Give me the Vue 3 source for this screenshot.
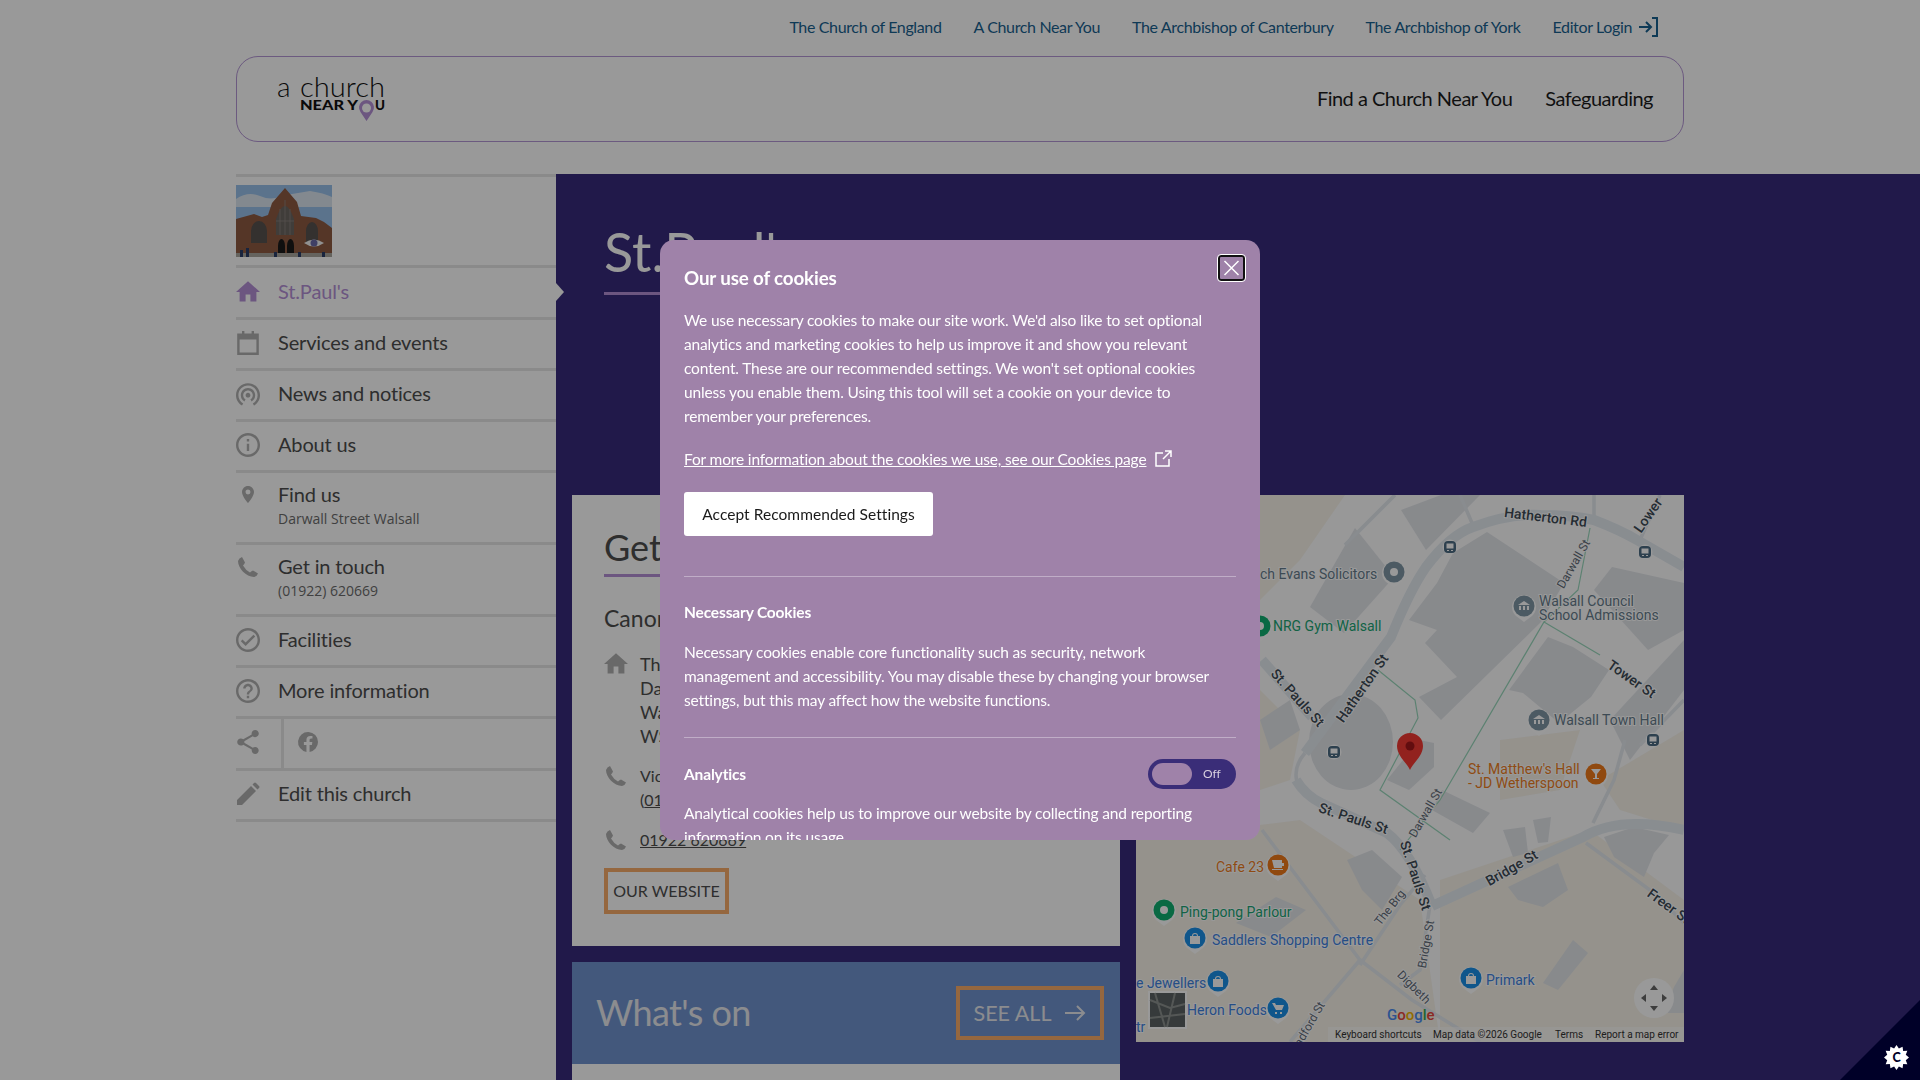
<script setup>
const topLinks = ['The Church of England', 'A Church Near You', 'The Archbishop of Canterbury', 'The Archbishop of York']

const icons = {
  home: 'M10 20v-6h4v6h5v-8h3L12 3 2 12h3v8z',
  calendar: 'M7 2h2v2h6V2h2v2h4v18H3V4h4V2zM5 9v11h14V9H5z',
  news: 'M12 11c-1.1 0-2 .9-2 2 0 1.1.9 2 2 2s2-.9 2-2c0-1.1-.9-2-2-2zm6 2c0-3.31-2.69-6-6-6s-6 2.69-6 6c0 2.22 1.21 4.15 3 5.19l1-1.74c-1.19-.7-2-1.97-2-3.45 0-2.21 1.79-4 4-4s4 1.79 4 4c0 1.48-.81 2.75-2 3.45l1 1.74c1.79-1.04 3-2.97 3-5.19zM12 3C6.48 3 2 7.48 2 13c0 3.7 2.01 6.92 4.99 8.65l1-1.73C5.61 18.53 4 15.96 4 13c0-4.42 3.58-8 8-8s8 3.58 8 8c0 2.96-1.61 5.53-4 6.92l1 1.73c2.99-1.73 5-4.95 5-8.65 0-5.52-4.48-10-10-10z',
  info: 'M11 7h2v2h-2zm0 4h2v6h-2zm1-9C6.48 2 2 6.48 2 12s4.48 10 10 10 10-4.48 10-10S17.52 2 12 2zm0 18c-4.41 0-8-3.59-8-8s3.59-8 8-8 8 3.59 8 8-3.59 8-8 8z',
  pin: 'M12 3C8.7 3 6 5.7 6 9c0 4.5 6 11 6 11s6-6.500 6-11c0-3.300-2.700-6-6-6zm0 8.500a2.500 2.500 0 010-5 2.500 2.500 0 010 5z',
  phone: 'M6 2l3 5.500Q8.500 9 7 10.500 9.500 15 14 17.500 15.500 16 17 15.500l5 3Q21 21.500 18 22C10 22 2 13 2 6q1-3 4-4z',
  check: 'M12 2C6.48 2 2 6.48 2 12s4.48 10 10 10 10-4.48 10-10S17.52 2 12 2zm0 18c-4.41 0-8-3.59-8-8s3.59-8 8-8 8 3.59 8 8-3.59 8-8 8zm4.590-12.420L10 14.170l-2.590-2.580L6 13l4 4 8-8z',
  help: 'M11 18h2v-2h-2v2zm1-16C6.48 2 2 6.48 2 12s4.48 10 10 10 10-4.48 10-10S17.52 2 12 2zm0 18c-4.41 0-8-3.59-8-8s3.59-8 8-8 8 3.59 8 8-3.59 8-8 8zm0-14c-2.21 0-4 1.790-4 4h2c0-1.100.9-2 2-2s2 .9 2 2c0 2-3 1.750-3 5h2c0-2.250 3-2.500 3-5 0-2.210-1.790-4-4-4z',
  share: 'M18 16.080c-.76 0-1.440.3-1.960.77L8.910 12.700c.05-.23.09-.46.09-.7s-.04-.47-.09-.7l7.050-4.110c.54.5 1.250.81 2.040.81 1.660 0 3-1.340 3-3s-1.340-3-3-3-3 1.340-3 3c0 .24.04.47.09.7L8.040 9.810C7.500 9.310 6.790 9 6 9c-1.660 0-3 1.340-3 3s1.340 3 3 3c.79 0 1.500-.31 2.040-.81l7.120 4.160c-.05.21-.08.43-.08.65 0 1.610 1.310 2.920 2.920 2.920s2.920-1.310 2.920-2.920-1.310-2.920-2.920-2.920z',
  facebook: 'M22 12a10 10 0 10-11.560 9.880v-6.990H7.900V12h2.540V9.800c0-2.500 1.490-3.890 3.780-3.890 1.090 0 2.240.2 2.240.2v2.460h-1.260c-1.240 0-1.630.77-1.630 1.560V12h2.770l-.44 2.890h-2.330v6.990A10 10 0 0022 12z',
  edit: 'M1 23v-5L15 4l5 5L6 23H1zM16.500 2.500L18 1q1-1 2 0l3 3q1 1 0 2l-1.500 1.500-5-5z',
}

// phone, pin and the rest don't fill their box the same way
const box = (name) => (['phone', 'pin', 'edit', 'facebook'].includes(name) ? '0 0 24 24' : '2 2 20 20')

const sideNav = [
  { name: "St.Paul's", icon: 'home', active: true },
  { name: 'Services and events', icon: 'calendar' },
  { name: 'News and notices', icon: 'news' },
  { name: 'About us', icon: 'info' },
  { name: 'Find us', sub: 'Darwall Street Walsall', icon: 'pin' },
  { name: 'Get in touch', sub: '(01922) 620669', icon: 'phone' },
  { name: 'Facilities', icon: 'check' },
  { name: 'More information', icon: 'help' },
]

// map is drawn in page coordinates, see the viewBox on the svg
const tanAreas = [
  '1136,840 1300,820 1420,900 1440,1042 1136,1042',
  '1440,880 1590,830 1684,900 1684,1042 1440,1042',
  '1260,495 1345,495 1300,560 1260,600',
  '1600,780 1684,730 1684,830 1620,810',
  '1260,690 1300,730 1290,780 1260,790',
  '1500,740 1580,730 1560,790 1500,800',
]
const buildings = [
  '1487,532 1564,583 1541,622 1441,720 1419,697 1457,677 1425,643 1437,630 1409,620 1437,583 1453,553',
  '1355,528 1394,577 1344,633 1310,607',
  '1548,637 1573,647 1609,670 1591,697 1559,723 1523,693 1509,690',
  '1612,567 1684,583 1684,630 1648,650 1594,590',
  '1401,510 1441,495 1480,495 1426,550',
  '1387,780 1419,740 1434,743 1434,767 1409,790',
  '1347,860 1372,850 1402,877 1382,910 1362,890',
  '1442,790 1490,813 1473,833 1432,810',
  '1508,887 1558,863 1568,890 1543,907 1518,900',
  '1543,983 1573,940 1588,953 1558,990',
  '1503,830 1525,827 1528,853 1513,857',
  '1533,820 1551,817 1548,842 1538,843',
  '1604,837 1634,827 1669,835 1654,853 1644,877 1614,857',
  '1674,987 1684,970 1684,1013 1664,1013',
  '1236,923 1276,897 1306,910 1271,937',
  '1610,720 1684,640 1684,690 1630,760',
  '1260,720 1290,700 1300,730 1270,750',
]
const bigRoads = [
  'M1305 753L1391 637Q1410 590 1426 567Q1450 535 1473 527Q1510 513 1541 515Q1570 515 1594 520Q1620 530 1637 540L1684 567',
  'M1432 906L1583 837Q1620 815 1684 830',
  'M1296 780Q1305 795 1321 803L1387 833Q1410 850 1432 906',
  'M1262 660L1312 717',
]
const minorRoads = [
  'M1305 753Q1290 770 1300 790',
  'M1586 843L1654 893L1684 923',
  'M1593 823L1614 780L1625 740',
  'M1262 830L1360 960L1412 1000L1480 1042',
  'M1360 960L1290 1042',
  'M1360 965L1400 905L1425 875',
  'M1430 905L1420 970L1400 985',
  'M1594 495L1594 525M1660 495L1640 540',
  'M1395 495L1345 545',
  'M1460 495L1475 530',
  'M1640 745L1684 700',
]
const paths = [
  'M1590 528L1578 590L1544 622L1440 800L1400 850',
  'M1544 622L1600 655',
  'M1378 670L1415 700L1418 718L1380 790L1450 840',
]
const roadLabels = [
  { text: 'Hatherton Rd', x: 1545, y: 522, r: 7, big: true },
  { text: 'Hatherton St', x: 1366, y: 691, r: -55, big: true },
  { text: 'St. Pauls St', x: 1294, y: 701, r: 48, big: true },
  { text: 'Tower St', x: 1629, y: 683, r: 35, big: true },
  { text: 'Darwall St', x: 1577, y: 566, r: -60, small: true },
  { text: 'Lower', x: 1652, y: 518, r: -55, big: true },
  { text: 'St. Pauls St', x: 1352, y: 823, r: 18, big: true },
  { text: 'St. Pauls St', x: 1411, y: 877, r: 72, big: true },
  { text: 'Bridge St', x: 1514, y: 872, r: -30, big: true },
  { text: 'Darwall St', x: 1429, y: 815, r: -60, small: true },
  { text: 'The Brg', x: 1393, y: 910, r: -52, small: true },
  { text: 'Bridge St', x: 1430, y: 945, r: -80, small: true },
  { text: 'Digbeth', x: 1411, y: 990, r: 45, small: true },
  { text: 'adford St', x: 1313, y: 1026, r: -60, small: true },
  { text: 'Freer St', x: 1666, y: 910, r: 36, big: true },
]
const pois = [
  { lines: ['ch Evans Solicitors'], x: 1260, y: 579, color: '#667c8c' },
  { lines: ['Walsall Council', 'School Admissions'], x: 1539, y: 606, color: '#667c8c' },
  { lines: ['Walsall Town Hall'], x: 1554, y: 725, color: '#667c8c' },
  { lines: ['NRG Gym Walsall'], x: 1273, y: 631, color: '#20a574' },
  { lines: ["St. Matthew's Hall", '- JD Wetherspoon'], x: 1468, y: 774, color: '#ee7e1e' },
  { lines: ['Cafe 23'], x: 1216, y: 872, color: '#ee7e1e' },
  { lines: ['Ping-pong Parlour'], x: 1180, y: 917, color: '#20a574' },
  { lines: ['Saddlers Shopping Centre'], x: 1212, y: 945, color: '#3f82e0' },
  { lines: ['Primark'], x: 1486, y: 985, color: '#3f82e0' },
  { lines: ['e Jewellers'], x: 1136, y: 988, color: '#3f82e0' },
  { lines: ['Heron Foods'], x: 1187, y: 1015, color: '#3f82e0' },
  { lines: ['tr'], x: 1136, y: 1032, color: '#3f82e0' },
]
const markers = [
  { x: 1394, y: 572, color: '#7f97a6', kind: 'dot' },
  { x: 1524, y: 606, color: '#7f97a6', kind: 'hall' },
  { x: 1539, y: 720, color: '#7f97a6', kind: 'hall' },
  { x: 1260, y: 626, color: '#10b070', kind: 'dot' },
  { x: 1596, y: 774, color: '#f07a1a', kind: 'glass' },
  { x: 1278, y: 865, color: '#f07a1a', kind: 'cup' },
  { x: 1164, y: 910, color: '#10b070', kind: 'dot' },
  { x: 1195, y: 938, color: '#1a8fe8', kind: 'bag' },
  { x: 1218, y: 981, color: '#1a8fe8', kind: 'bag' },
  { x: 1471, y: 978, color: '#1a8fe8', kind: 'bag' },
  { x: 1278, y: 1008, color: '#1a8fe8', kind: 'cart' },
]
const busStops = [
  { x: 1450, y: 547 },
  { x: 1645, y: 552 },
  { x: 1653, y: 740 },
  { x: 1334, y: 752 },
]
</script>

<template>
  <div class="page">
    <div class="toplinks">
      <a v-for="link in topLinks" :key="link">{{ link }}</a>
      <a class="login">Editor Login
        <svg viewBox="0 0 20 20" class="stroke-icon">
          <path d="M1 10h11M8 5l5 5-5 5M14 1h5v18h-5" />
        </svg>
      </a>
    </div>

    <header class="siteheader">
      <svg class="logo" viewBox="0 0 108 46">
        <text x="0" y="18" class="logo-top" font-size="28">a</text>
        <text x="23" y="18" class="logo-top" textLength="85" lengthAdjust="spacingAndGlyphs">church</text>
        <text x="23" y="31" class="logo-bottom" textLength="58" lengthAdjust="spacingAndGlyphs">NEAR Y</text>
        <text x="98" y="31" class="logo-bottom" textLength="10" lengthAdjust="spacingAndGlyphs">U</text>
        <path d="M89.500 42l-6-9a7.500 7.500 0 1112 0z" fill="#b48fd6" />
        <circle cx="89.500" cy="29" r="4.500" fill="#fff" />
      </svg>
      <nav class="mainnav">
        <a>Find a Church Near You</a>
        <a>Safeguarding</a>
      </nav>
    </header>

    <div class="main">
      <aside class="sidebar">
        <div class="photo">
          <svg viewBox="0 0 96 72" width="96" height="72">
            <rect width="96" height="72" fill="#98c0ea" />
            <path d="M0 14q12-8 24-3t20 0l30-5q14 2 22 6v10H0z" fill="#dbe5ef" />
            <path d="M0 34l18-5 8 3 6-2 4-12L49 3l12 14 4 14 15 2 8 4 8 6v29H0z" fill="#8e5a42" />
            <path d="M40 34q9-26 18 0v16H40z" fill="#6b6662" />
            <path d="M49 15v35M44 24v26M54 24v26M40 36h18" stroke="#8e8780" stroke-width="0.800" fill="none" />
            <path d="M15 46a8 10 0 0116 0v12H15zM70 46a6 9 0 0112 0v11H70z" fill="#57524f" />
            <path d="M42 61a3.500 7 0 017 0v9h-7zM51 61a3.500 7 0 017 0v9h-7z" fill="#191919" />
            <rect y="68" width="96" height="4" fill="#a8a59d" />
            <path d="M4 72v-7h3v7zM10 72v-9h3v9zM38 72v-5h3v5zM62 72v-5h3v5zM86 72v-5h3v5z" fill="#2b3d66" />
            <path d="M68 58q10-7 20 0-10 7-20 0z" fill="#f2f2f2" />
            <circle cx="78" cy="58" r="3.500" fill="#6a6aa8" />
          </svg>
        </div>
        <a
          v-for="item in sideNav"
          :key="item.name"
          class="navrow"
          :class="{ active: item.active, two: item.sub }"
        >
          <svg class="icon" :viewBox="box(item.icon)"><path :d="icons[item.icon]" /></svg>
          <span class="navtext">
            <span class="navname">{{ item.name }}</span>
            <span v-if="item.sub" class="navsub">{{ item.sub }}</span>
          </span>
        </a>
        <div class="navrow social">
          <svg class="icon" :viewBox="box('share')"><path :d="icons.share" /></svg>
          <span class="socialsplit"></span>
          <svg class="icon fb" :viewBox="box('facebook')"><path :d="icons.facebook" /></svg>
        </div>
        <a class="navrow last">
          <svg class="icon" :viewBox="box('edit')"><path :d="icons.edit" /></svg>
          <span class="navtext"><span class="navname">Edit this church</span></span>
        </a>
      </aside>

      <main class="content">
        <div class="titleblock">
          <h1>St.Paul's</h1>
        </div>
        <div class="columns">
          <div class="leftcol">
            <section class="card">
              <h2>Get in touch</h2>
              <h3>Canon Chris</h3>
              <div class="contact address">
                <svg class="icon" :viewBox="box('home')"><path :d="icons.home" /></svg>
                <p>The Vicarage<br />Darwall Street<br />Walsall<br />WS1 1DA</p>
              </div>
              <div class="contact">
                <svg class="icon" :viewBox="box('phone')"><path :d="icons.phone" /></svg>
                <p>Vicar<br />(<u>01922</u>) 620669</p>
              </div>
              <div class="contact">
                <svg class="icon" :viewBox="box('phone')"><path :d="icons.phone" /></svg>
                <p><u>01922 620669</u></p>
              </div>
              <a class="outline-btn">OUR WEBSITE</a>
            </section>
            <section class="whatson">
              <h2>What's on</h2>
              <a class="seeall">SEE ALL
                <svg viewBox="0 0 22 18" class="stroke-icon"><path d="M1 9h19M13 2l7 7-7 7" /></svg>
              </a>
            </section>
            <section class="nextcard"></section>
          </div>

          <div class="map">
            <svg viewBox="1136 495 548 547" width="548" height="547">
              <rect x="1136" y="495" width="548" height="547" fill="#fdfdfe" />
              <polygon v-for="t in tanAreas" :key="t" :points="t" fill="#f8f4ea" />
              <polygon v-for="b in buildings" :key="b" :points="b" fill="#e3e6ea" />
              <ellipse cx="1351" cy="742" rx="42" ry="48" fill="#e3e6ea" />
              <path v-for="r in minorRoads" :key="r" :d="r" class="road-minor" />
              <path v-for="r in bigRoads" :key="r" :d="r" class="road-big" />
              <path v-for="p in paths" :key="p" :d="p" class="footpath" />

              <g v-for="(l, i) in roadLabels" :key="i" :transform="`translate(${l.x} ${l.y}) rotate(${l.r})`">
                <text text-anchor="middle" class="roadlabel" :class="{ big: l.big, small: l.small }">{{ l.text }}</text>
              </g>

              <text v-for="(p, i) in pois" :key="i" :x="p.x" :y="p.y" class="poi" :fill="p.color">
                <tspan v-for="(line, n) in p.lines" :key="line" :x="p.x" :dy="n ? 14 : 0">{{ line }}</tspan>
              </text>

              <g v-for="(m, i) in markers" :key="i" :transform="`translate(${m.x} ${m.y})`">
                <path d="M0 16l-8-6a12 12 0 1116 0z" fill="#fff" />
                <circle r="10.500" :fill="m.color" />
                <circle v-if="m.kind === 'dot'" r="4" fill="#fff" />
                <path v-if="m.kind === 'hall'" d="M-6-1l6-4 6 4zM-5 0h2v4h-2zM-1 0h2v4h-2zM3 0h2v4H3z" fill="#fff" />
                <path v-if="m.kind === 'glass'" d="M-5-5H5L1 0v4h2v1h-6V4h2V0z" fill="#fff" />
                <path v-if="m.kind === 'cup'" d="M-6-5H4v3h2v3H4v2h-8zM-6 4H5v1H-6z" fill="#fff" />
                <path v-if="m.kind === 'bag'" d="M-5-2h2a3 3 0 016 0h2v8h-10zM-2-2h4a2 2 0 00-4 0z" fill="#fff" fill-rule="evenodd" />
                <path v-if="m.kind === 'cart'" d="M-6-5h3l1 2h8l-2 5h-6zM-3 4h2v2h-2zM2 4h2v2H2z" fill="#fff" />
              </g>

              <g v-for="(b, i) in busStops" :key="i" :transform="`translate(${b.x} ${b.y})`">
                <circle r="7.500" fill="#fff" />
                <rect x="-6" y="-6" width="12" height="12" rx="4" fill="#4b6b83" />
                <path d="M-3.500-3.500h7v5h-7zM-3 3h2v1h-2zM1 3h2v1H1z" fill="#fff" />
              </g>

              <path d="M1410 770c-3-7-13-14-13-24a13 13 0 0126 0c0 10-10 17-13 24z" fill="#f43a33" />
              <circle cx="1410" cy="746" r="4.500" fill="#a3161a" />

              <text x="1387" y="1020" class="googlelogo"><tspan fill="#4a8bf0">G</tspan><tspan fill="#e8453c">o</tspan><tspan fill="#f4b400">o</tspan><tspan fill="#4a8bf0">g</tspan><tspan fill="#34a853">l</tspan><tspan fill="#e8453c">e</tspan></text>

              <rect x="1148" y="991" width="39" height="38" fill="#fff" />
              <rect x="1150" y="993" width="35" height="34" fill="#5b6263" />
              <path d="M1150 1000l20 8 15-4M1155 993l10 34M1175 993l-8 34M1150 1018l35-4" stroke="#8d928f" stroke-width="2" fill="none" />

              <circle cx="1654" cy="998" r="20" fill="#fff" />
              <path d="M1654 985l-4 5h8zM1654 1011l-4-5h8zM1641 998l5-4v8zM1667 998l-5-4v8z" fill="#666" />

              <rect x="1328" y="1027" width="356" height="15" fill="#fff" opacity="0.5" />
              <text class="mapfoot" x="1335" y="1038">Keyboard shortcuts</text>
              <text class="mapfoot" x="1433" y="1038">Map data ©2026 Google</text>
              <text class="mapfoot" x="1555" y="1038">Terms</text>
              <text class="mapfoot" x="1595" y="1038">Report a map error</text>
            </svg>
          </div>
        </div>
      </main>
    </div>

    <div class="overlay">
      <div class="modal">
        <button class="close" aria-label="Close">
          <svg viewBox="0 0 16 16"><path d="M1 1l14 14M15 1L1 15" /></svg>
        </button>
        <h2 class="modal-title">Our use of cookies</h2>
        <p class="first">We use necessary cookies to make our site work. We'd also like to set optional<br />analytics and marketing cookies to help us improve it and show you relevant<br />content. These are our recommended settings. We won't set optional cookies<br />unless you enable them. Using this tool will set a cookie on your device to<br />remember your preferences.</p>
        <a class="morelink"><u>For more information about the cookies we use, see our Cookies page</u>
          <svg viewBox="0 0 18 18" class="stroke-icon"><path d="M9 3H2v13h13V9M11 1h6v6M17 1l-8 8" /></svg>
        </a>
        <button class="accept">Accept Recommended Settings</button>
        <hr class="first-rule" />
        <h3>Necessary Cookies</h3>
        <p class="necessary">Necessary cookies enable core functionality such as security, network<br />management and accessibility. You may disable these by changing your browser<br />settings, but this may affect how the website functions.</p>
        <hr class="second-rule" />
        <div class="analytics">
          <h3>Analytics</h3>
          <div class="toggle"><span class="knob"></span><span class="off">Off</span></div>
        </div>
        <p class="analytical">Analytical cookies help us to improve our website by collecting and reporting<br />information on its usage.</p>
      </div>
    </div>

    <button class="cookiebtn" aria-label="Cookie settings">
      <svg viewBox="0 0 24 24">
        <path d="M12 0l2.300 3.400L17.800 1.700l.6 4 4-.1-1.500 3.800 3.100 2.600-3.100 2.600 1.500 3.800-4-.1-.6 4-3.500-1.700L12 24l-2.300-3.400-3.500 1.700-.6-4-4 .1 1.500-3.800L0 12l3.100-2.600-1.500-3.800 4 .1.6-4 3.500 1.700z" fill="#fff" />
        <text x="12" y="16.500" text-anchor="middle" class="gear-c">C</text>
      </svg>
    </button>
  </div>
</template>

<style>
html, body {
  margin: 0;
  overflow: hidden;
  background: #fff;
}
</style>

<style scoped>
.page {
  height: 1080px;
  font-family: Lato, "Open Sans", sans-serif;
  color: #4d4d4d;
  overflow: hidden;
}

.toplinks {
  height: 56px;
  box-sizing: border-box;
  padding: 0 262px 3px 0;
  display: flex;
  justify-content: flex-end;
  align-items: center;
  gap: 32px;
  font-size: 16px;
  letter-spacing: -0.36px;
  color: #18618f;
}
.login {
  display: flex;
  align-items: center;
  gap: 6px;
}
.login svg {
  width: 20px;
  height: 20px;
}
.stroke-icon {
  fill: none;
  stroke: currentColor;
  stroke-width: 2;
}

.siteheader {
  margin: 0 236px;
  height: 86px;
  box-sizing: border-box;
  border: 1px solid #b496d5;
  border-radius: 22px;
  display: flex;
  justify-content: space-between;
  align-items: center;
  padding: 0 30px 0 40px;
}
.logo {
  width: 108px;
  height: 46px;
  margin-top: 6px;
  overflow: visible;
}
.logo-top {
  font-family: Lato, sans-serif;
  font-weight: 300;
  font-size: 28px;
  fill: #111;
}
.logo-bottom {
  font-family: Lato, sans-serif;
  font-weight: 900;
  font-size: 14px;
  fill: #111;
}
.mainnav {
  display: flex;
  gap: 33px;
  font-size: 20px;
  letter-spacing: -0.5px;
  color: #1c1c1c;
  margin-top: -2px;
}

.main {
  margin: 32px 0 0 236px;
  height: 906px;
  display: flex;
}

.sidebar {
  width: 320px;
  flex: none;
}
.photo {
  border-top: 3px solid #e6e6e6;
  padding: 8px 0;
  height: 72px;
}
.photo svg {
  display: block;
}
.navrow {
  position: relative;
  display: flex;
  gap: 18px;
  box-sizing: border-box;
  height: 51px;
  border-top: 3px solid #e6e6e6;
  padding-top: 11px;
  font-size: 20px;
}
.navrow.active {
  height: 52px;
  padding-top: 12px;
  color: #b48fd6;
}
.navrow.active .icon {
  fill: #b48fd6;
}
.navrow.active::after {
  content: "";
  position: absolute;
  right: -8px;
  top: 15px;
  border-left: 8px solid #fff;
  border-top: 9px solid transparent;
  border-bottom: 9px solid transparent;
}
.navrow.two {
  height: 72px;
  padding-top: 10px;
}
.navrow.last {
  height: 54px;
  border-bottom: 3px solid #e6e6e6;
}
.icon {
  width: 24px;
  height: 24px;
  flex: none;
  fill: #b0b0b0;
}
.navtext {
  display: flex;
  flex-direction: column;
  margin-top: -2px;
}
.navname {
  line-height: 26px;
  letter-spacing: -0.15px;
}
.navsub {
  font-family: "Open Sans", sans-serif;
  font-size: 14px;
  line-height: 20px;
  margin-top: 2px;
  color: #6b6b6b;
}
.social {
  height: 52px;
  gap: 0;
}
.socialsplit {
  width: 3px;
  height: 49px;
  margin: -11px 12px 0 21px;
  background: #e6e6e6;
}

.content {
  flex: 1;
  background: #372b7c;
  min-width: 0;
}
.titleblock {
  padding: 46px 0 0 48px;
  height: 275px;
}
h1 {
  display: inline-block;
  margin: 0;
  padding: 0 44px 8px 0;
  font-size: 54px;
  line-height: 64px;
  font-weight: 400;
  color: #fff;
  border-bottom: 3px solid #b48fd6;
}
.columns {
  padding-left: 16px;
  display: flex;
  gap: 16px;
  align-items: flex-start;
}
.leftcol {
  width: 548px;
  display: flex;
  flex-direction: column;
  gap: 16px;
}
.card {
  background: #fff;
  padding: 30px 32px 32px;
  box-sizing: border-box;
  height: 451px;
}
.card h2 {
  display: inline-block;
  margin: 0;
  padding-bottom: 5px;
  font-size: 36px;
  line-height: 44px;
  font-weight: 400;
  border-bottom: 3px solid #b48fd6;
}
.card h3 {
  margin: 26px 0 19px;
  font-size: 23px;
  line-height: 30px;
  font-weight: 400;
}
.contact {
  display: flex;
  gap: 12px;
  margin-bottom: 16px;
  font-size: 16px;
  line-height: 24px;
}
.contact.address {
  font-size: 18px;
}
.contact p {
  margin: 0;
}
.outline-btn {
  display: inline-block;
  box-sizing: border-box;
  height: 46px;
  width: 125px;
  border: 4px solid #f8ac69;
  text-align: center;
  line-height: 38px;
  font-size: 16px;
}
.whatson {
  height: 102px;
  box-sizing: border-box;
  background: #7093cf;
  display: flex;
  justify-content: space-between;
  align-items: center;
  padding: 0 16px 0 24px;
  color: #e8eaee;
}
.whatson h2 {
  margin: 0 0 2px;
  font-size: 36px;
  letter-spacing: -0.6px;
  font-weight: 400;
}
.seeall {
  width: 148px;
  height: 54px;
  box-sizing: border-box;
  border: 4px solid #f8ac69;
  display: flex;
  align-items: center;
  justify-content: center;
  gap: 13px;
  font-size: 21.500px;
}
.seeall svg {
  width: 22px;
  height: 18px;
}
.nextcard {
  margin-top: -16px;
  height: 60px;
  background: #fff;
}
.map {
  width: 548px;
  height: 547px;
  overflow: hidden;
}
.map svg {
  display: block;
  font-family: Roboto, sans-serif;
}
.road-big {
  fill: none;
  stroke: #e4ebf1;
  stroke-width: 10;
}
.road-minor {
  fill: none;
  stroke: #e4e9ee;
  stroke-width: 3.500;
}
.footpath {
  fill: none;
  stroke: #9ad8bc;
  stroke-width: 1.200;
}
.roadlabel {
  font-size: 12.500px;
  font-weight: 400;
  fill: #5f6b77;
  paint-order: stroke;
  stroke: #fff;
  stroke-width: 2px;
}
.roadlabel.big {
  font-size: 14px;
  font-weight: 500;
  fill: #3d4a55;
}
.roadlabel.small {
  font-size: 12px;
}
.poi {
  font-size: 14px;
  paint-order: stroke;
  stroke: #fff;
  stroke-width: 2px;
}
.googlelogo {
  font-size: 15px;
  font-weight: 500;
}
.mapfoot {
  font-size: 10px;
  fill: #333;
}

.overlay {
  position: fixed;
  inset: 0;
  z-index: 10;
  background: rgba(0, 0, 0, 0.4);
  display: flex;
  justify-content: center;
  align-items: center;
}
.modal {
  position: relative;
  width: 600px;
  height: 600px;
  box-sizing: border-box;
  background: #9f82a9;
  border-radius: 14px;
  padding: 26px 24px 0;
  overflow: hidden;
  color: #fff;
  font-size: 15.500px;
  letter-spacing: -0.15px;
  line-height: 24px;
}
.close {
  position: absolute;
  top: 15px;
  right: 15px;
  width: 27px;
  height: 26px;
  padding: 3px;
  background: transparent;
  border: 2px solid #111;
  border-radius: 3px;
  outline: 1px solid #fff;
  display: flex;
}
.close svg {
  fill: none;
  stroke: #fff;
  stroke-width: 1.500;
  width: 100%;
  height: 100%;
}
.modal-title {
  margin: 0 0 18px;
  font-size: 18.800px;
  line-height: 24px;
  font-weight: 700;
}
.modal p {
  margin: 0;
  white-space: nowrap;
}
.morelink {
  display: flex;
  align-items: center;
  gap: 8px;
  margin-top: 19px;
}
.morelink svg {
  width: 18px;
  height: 18px;
  stroke-width: 1.500;
}
.accept {
  display: block;
  margin-top: 21px;
  width: 249px;
  height: 44px;
  background: #fff;
  border: 0;
  border-radius: 3px;
  font: inherit;
  letter-spacing: 0.05px;
  color: #1a1a1a;
}
hr {
  border: 0;
  height: 1px;
  background: rgba(255, 255, 255, 0.35);
  margin: 0;
}
.first-rule {
  margin: 40px 0 23px;
}
.modal h3 {
  margin: 0;
  font-size: 15.500px;
  line-height: 24px;
  font-weight: 700;
}
.necessary {
  margin-top: 16px !important;
}
.second-rule {
  margin: 25px 0 21px;
}
.analytics {
  display: flex;
  justify-content: space-between;
  align-items: center;
}
.toggle {
  width: 88px;
  height: 30px;
  box-sizing: border-box;
  border-radius: 15px;
  background: #3a2d78;
  display: flex;
  align-items: center;
  padding: 0 4px;
}
.knob {
  width: 40px;
  height: 22px;
  border-radius: 11px;
  background: #9f82a9;
}
.off {
  margin-left: 11px;
  font-size: 12px;
  color: #d9d0e0;
}
.analytical {
  margin-top: 12px !important;
}

.cookiebtn {
  position: fixed;
  right: 0;
  bottom: 0;
  z-index: 11;
  width: 80px;
  height: 80px;
  padding: 0;
  border: 0;
  background: #000028;
  clip-path: polygon(100% 0, 100% 100%, 0 100%);
}
.cookiebtn svg {
  position: absolute;
  right: 11px;
  bottom: 10px;
  width: 25px;
  height: 25px;
}
.gear-c {
  font-family: Lato, sans-serif;
  font-weight: 900;
  font-size: 12px;
  fill: #000028;
}
</style>
